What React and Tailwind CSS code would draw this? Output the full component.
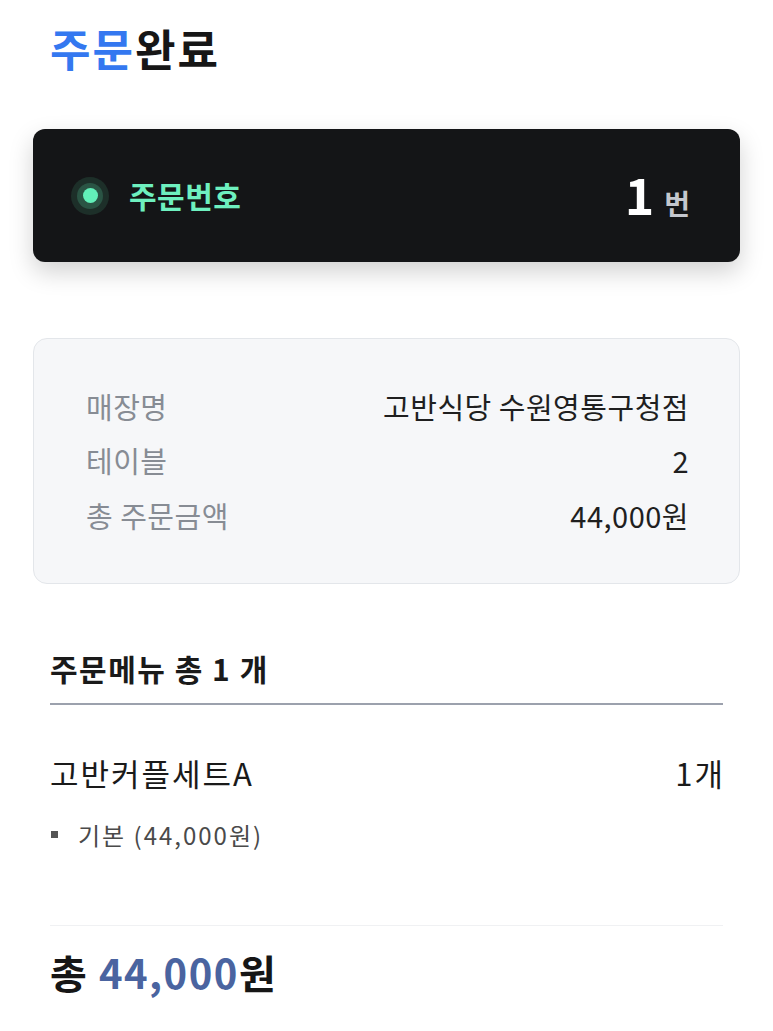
const info = [
  { label: "매장명", value: "고반식당 수원영통구청점" },
  { label: "테이블", value: "2" },
  { label: "총 주문금액", value: "44,000원" },
];

export default function App() {
  return (
    <div
      className="min-h-screen w-full bg-white text-[#1a1a1a]"
      style={{ fontFamily: '"Noto Sans CJK KR", "Noto Sans", sans-serif' }}
    >
      <div className="px-[33px] pt-[18px] pb-10">
        <h1 className="px-[17px] text-[44px] font-bold leading-[60px] tracking-[2px]">
          <span className="text-[#3478f0]">주문</span>
          <span className="text-[#161616]">완료</span>
        </h1>

        <div className="mt-[51px] flex h-[133px] items-center justify-between rounded-[12px] bg-[#141517] pl-[38px] pr-[50px] shadow-[0_10px_24px_rgba(0,0,0,0.18)]">
          <div className="flex items-center gap-[20px]">
            <div className="flex h-[38px] w-[38px] items-center justify-center rounded-full bg-[#1d2f29]">
              <div className="flex h-[26px] w-[26px] items-center justify-center rounded-full bg-[#2a5444]">
                <div className="h-[15px] w-[15px] rounded-full bg-[#62f0b9]" />
              </div>
            </div>
            <span className="text-[30px] font-bold tracking-[0.5px] text-[#6ef0bf]">
              주문번호
            </span>
          </div>
          <div className="flex items-baseline gap-[10px]">
            <span className="text-[50px] font-bold leading-none text-white">1</span>
            <span className="text-[28px] font-bold text-[#c4c7ce]">번</span>
          </div>
        </div>

        <div className="mt-[76px] rounded-[14px] border border-[#e3e6ea] bg-[#f6f7f9] pl-[52px] pr-[50px] py-[40px]">
          {info.map((row) => (
            <div key={row.label} className="flex h-[54.5px] items-center justify-between text-[29px] tracking-[0.5px]">
              <span className="text-[#878c94]">{row.label}</span>
              <span className="text-[#1f1f1f]">{row.value}</span>
            </div>
          ))}
        </div>

        <div className="px-[17px]">
          <div className="mt-[64px] border-b-2 border-[#9ca1ad] pb-[15px]">
            <h2 className="text-[30px] font-bold leading-[40px] tracking-[1.5px] text-[#1a1a1a]">
              주문메뉴 총 1 개
            </h2>
          </div>

          <div className="mt-[46px] flex items-center justify-between text-[31px] leading-[44px] tracking-[2px] text-[#1a1a1a]">
            <span>고반커플세트A</span>
            <span className="-mr-[2px]">1개</span>
          </div>
          <div className="mt-[18px] flex items-center gap-[20px] pl-[1px] text-[24px] leading-[44px] tracking-[2px] text-[#4a4a4a]">
            <span className="h-[7px] w-[7px] bg-[#555]" />
            <span>기본 (44,000원)</span>
          </div>

          <div className="mt-[68px] border-t border-[#f0f1f3]" />

          <div className="mt-[22px] text-[40px] font-bold leading-[48px] tracking-[1.5px]">
            <span className="text-[#161616]">총 </span>
            <span className="text-[#4a64a0]">44,000</span>
            <span className="text-[#161616]">원</span>
          </div>
        </div>
      </div>
    </div>
  );
}
